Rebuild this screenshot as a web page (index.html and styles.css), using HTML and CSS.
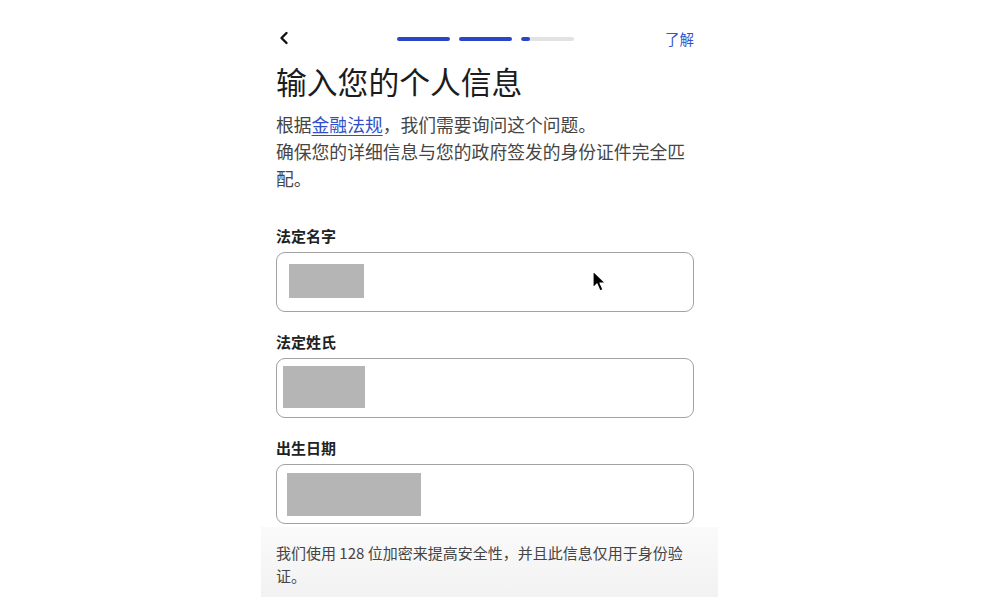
FILE: index.html
```html
<!DOCTYPE html>
<html lang="zh-CN">
<head>
    <meta charset="UTF-8">
    <meta name="viewport" content="width=device-width, initial-scale=1.0">
    <title>输入您的个人信息</title>
    <link rel="stylesheet" href="styles.css">
</head>
<body>
    <div class="screen">
        <div class="content">
            <div class="topbar">
                <button class="back" aria-label="返回">
                    <svg width="12" height="14" viewBox="0 0 12 14">
                        <path d="M8.5 2 L3.5 7 L8.5 12" fill="none" stroke="#111" stroke-width="2.4" stroke-linecap="round" stroke-linejoin="round"/>
                    </svg>
                </button>
                <div class="steps">
                    <span class="step done"></span>
                    <span class="step done"></span>
                    <span class="step"><span class="fill"></span></span>
                </div>
                <a class="learn" href="#">了解</a>
            </div>

            <h1>输入您的个人信息</h1>
            <p class="intro">根据<a href="#">金融法规</a>，我们需要询问这个问题。<br>确保您的详细信息与您的政府签发的身份证件完全匹配。</p>

            <form class="fields">
                <label>法定名字</label>
                <div class="field">
                    <span class="redact r1"></span>
                    <svg class="cursor" width="16" height="24" viewBox="0 0 16 24">
                        <path d="M1 1 L1 18 L5 14 L8 21 L11 19.6 L8 13 L13.5 13 Z" fill="#000" stroke="#fff" stroke-width="1.2" stroke-linejoin="round"/>
                    </svg>
                </div>

                <label>法定姓氏</label>
                <div class="field">
                    <span class="redact r2"></span>
                </div>

                <label>出生日期</label>
                <div class="field">
                    <span class="redact r3"></span>
                </div>
            </form>
        </div>

        <div class="footer">
            <p>我们使用 128 位加密来提高安全性，并且此信息仅用于身份验证。</p>
        </div>
    </div>
</body>
</html>
```

FILE: styles.css
```css
body {
    margin: 0;
    background: #fff;
    font-family: "Noto Sans CJK SC", "Noto Sans", sans-serif;
    color: #222;
}
.screen {
    width: 457px;
    margin-left: 261px;
    background: #fff;
}
.content {
    padding: 24px 24px 0 15px;
}
.topbar {
    height: 28px;
    display: flex;
    align-items: center;
    justify-content: space-between;
}
.back {
    border: none;
    background: none;
    padding: 0;
    margin-left: 2px;
    width: 14px;
    height: 16px;
    display: flex;
    align-items: center;
}
.steps {
    display: flex;
    gap: 9px;
    margin-left: 105px;
    margin-right: auto;
    margin-top: 1px;
}
.step {
    width: 53px;
    height: 4px;
    border-radius: 2px;
    background: #e2e2e4;
    overflow: hidden;
}
.step.done {
    background: #2b45c8;
}
.step .fill {
    display: block;
    width: 9px;
    height: 4px;
    background: #2b45c8;
    border-radius: 2px;
}
.learn {
    color: #3656d0;
    font-size: 14.5px;
    text-decoration: none;
}
h1 {
    margin: 9px 0 0;
    font-size: 30.8px;
    line-height: 40px;
    font-weight: 400;
    color: #1c1c1c;
}
.intro {
    margin: 10px 0 0;
    font-size: 17.8px;
    line-height: 27px;
    color: #454545;
}
.intro a {
    color: #2f4fc8;
    text-decoration: underline;
    text-underline-offset: 3px;
}
.fields {
    margin-top: 34px;
}
.fields label {
    display: block;
    font-size: 15px;
    line-height: 20px;
    font-weight: 700;
    color: #222;
    margin-bottom: 6px;
}
.field {
    position: relative;
    height: 60px;
    box-sizing: border-box;
    border: 1.5px solid #a2a2a2;
    border-radius: 9px;
    margin-bottom: 20px;
    display: flex;
    align-items: center;
}
.fields .field:last-child {
    margin-bottom: 0;
}
.redact {
    display: block;
    background: #b5b5b5;
}
.r1 {
    width: 75px;
    height: 34px;
    margin-left: 12px;
    margin-top: -2px;
}
.r2 {
    width: 82px;
    height: 42px;
    margin-left: 6px;
    margin-top: -2px;
}
.r3 {
    width: 134px;
    height: 43px;
    margin-left: 10px;
}
.cursor {
    position: absolute;
    left: 315px;
    top: 17px;
}
.footer {
    margin-top: 3px;
    padding: 14px 24px 10px 15px;
    background: linear-gradient(#fafafa, #f2f2f2);
}
.footer p {
    margin: 0;
    font-size: 15px;
    line-height: 23px;
    color: #444;
}
```
